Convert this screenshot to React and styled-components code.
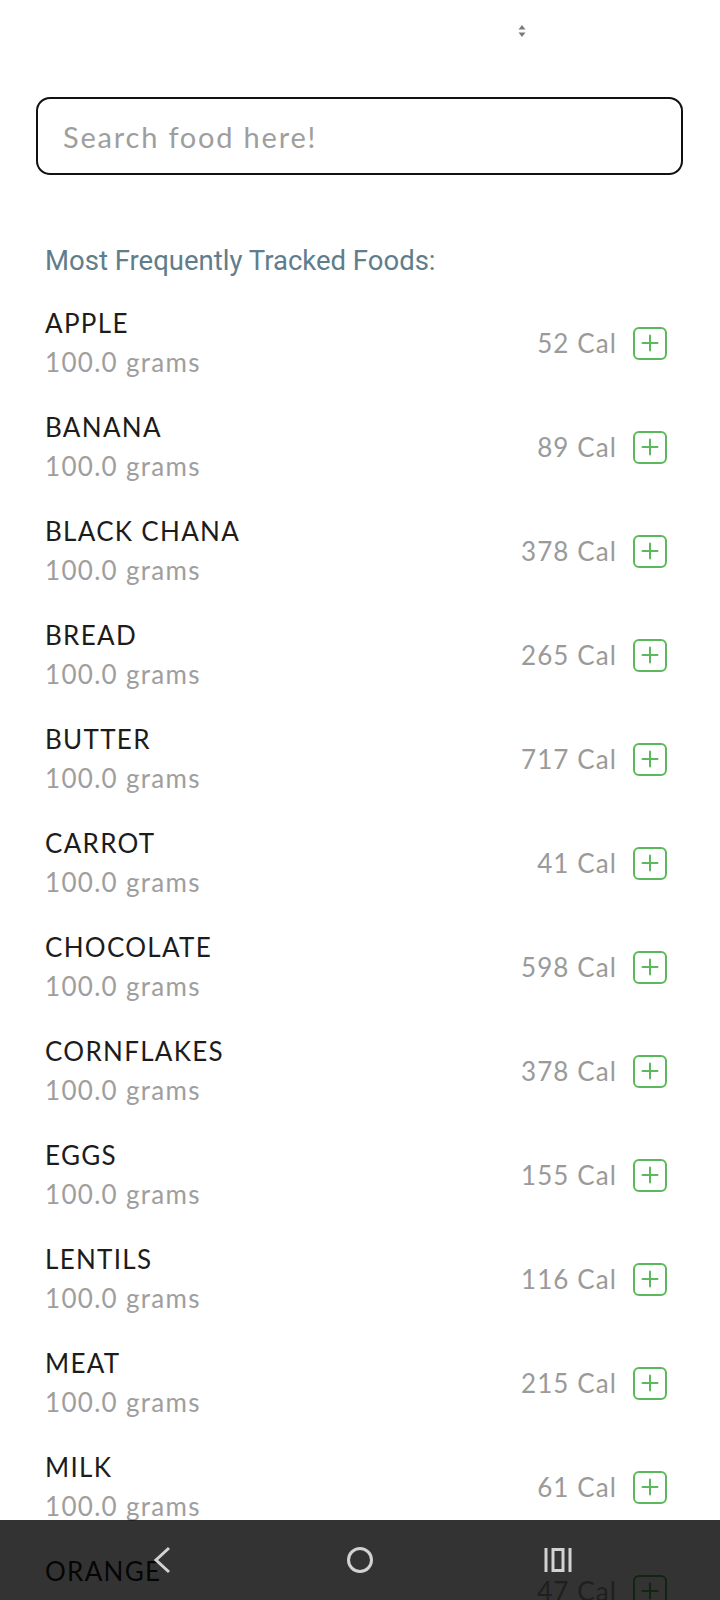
import React from "react";
import styled, { createGlobalStyle } from "styled-components";

const Global = createGlobalStyle`
  html, body { margin: 0; padding: 0; background: #fff; }
  * { box-sizing: border-box; }
`;

const Screen = styled.div`
  height: 100vh;
  overflow: hidden;
  background: #fff;
  font-family: Lato, "Noto Sans", sans-serif;
`;

const TopBar = styled.div`
  height: 97px;
  display: flex;
  justify-content: flex-start;
  padding-left: 518px;
  padding-top: 24px;
`;

const SearchWrap = styled.div`
  padding: 0 37px 0 36px;
`;

const SearchInput = styled.input`
  width: 100%;
  height: 78px;
  border: 2px solid #111;
  border-radius: 14px;
  padding: 0 25px;
  font-family: Lato, "Noto Sans", sans-serif;
  font-size: 29px;
  letter-spacing: 1.8px;
  color: #222;
  outline: none;
  background: #fff;
  &::placeholder { color: #9e9e9e; }
`;

const Heading = styled.div`
  margin: 70px 0 0 45px;
  font-family: Roboto, "Noto Sans", sans-serif;
  font-size: 27.5px;
  line-height: 31px;
  color: #607d8b;
`;

const List = styled.div`
  margin-top: 12px;
  padding: 0 53px 0 45px;
`;

const Row = styled.div`
  height: 104px;
  display: flex;
  align-items: center;
  justify-content: space-between;
`;

const Info = styled.div`
  align-self: flex-start;
  padding-top: 18px;
  display: flex;
  flex-direction: column;
`;

const Name = styled.div`
  font-size: 26px;
  line-height: 34px;
  letter-spacing: 1.3px;
  color: #1c1c1c;
`;

const Qty = styled.div`
  margin-top: 5px;
  font-size: 26px;
  line-height: 34px;
  letter-spacing: 1.3px;
  color: #9e9e9e;
`;

const Right = styled.div`
  display: flex;
  align-items: center;
  gap: 16px;
  margin-top: 6px;
`;

const Cal = styled.span`
  font-size: 26px;
  letter-spacing: 1.1px;
  color: #9a9a9a;
`;

const AddBtn = styled.button`
  width: 34px;
  height: 33px;
  border: 2px solid #5cb85c;
  border-radius: 6px;
  background: transparent;
  padding: 0;
  display: flex;
  align-items: center;
  justify-content: center;
`;

const NavBar = styled.div`
  position: fixed;
  left: 0;
  right: 0;
  bottom: 0;
  height: 80px;
  background: rgba(0, 0, 0, 0.8);
  display: flex;
  justify-content: center;
  align-items: center;
  gap: 158px;
`;

const NavSlot = styled.div`
  width: 40px;
  height: 40px;
  display: flex;
  align-items: center;
  justify-content: center;
`;

const foods = [
  ["APPLE", 52],
  ["BANANA", 89],
  ["BLACK CHANA", 378],
  ["BREAD", 265],
  ["BUTTER", 717],
  ["CARROT", 41],
  ["CHOCOLATE", 598],
  ["CORNFLAKES", 378],
  ["EGGS", 155],
  ["LENTILS", 116],
  ["MEAT", 215],
  ["MILK", 61],
  ["ORANGE", 47],
];

const SortIcon = () => (
  <svg width="8" height="14" viewBox="0 0 8 14">
    <path d="M4 1 L7.5 5.5 H0.5 Z" fill="#7a7a7a" />
    <path d="M4 13 L7.5 8.5 H0.5 Z" fill="#7a7a7a" />
  </svg>
);

const PlusIcon = () => (
  <svg width="18" height="18" viewBox="0 0 18 18">
    <path d="M9 1.5 V16.5 M1.5 9 H16.5" stroke="#5cb85c" strokeWidth="2" strokeLinecap="round" />
  </svg>
);

export default function App() {
  return (
    <Screen>
      <Global />
      <TopBar>
        <SortIcon />
      </TopBar>
      <SearchWrap>
        <SearchInput placeholder="Search food here!" />
      </SearchWrap>
      <Heading>Most Frequently Tracked Foods:</Heading>
      <List>
        {foods.map(([name, cal]) => (
          <Row key={name}>
            <Info>
              <Name>{name}</Name>
              <Qty>100.0 grams</Qty>
            </Info>
            <Right>
              <Cal>{cal} Cal</Cal>
              <AddBtn aria-label="add">
                <PlusIcon />
              </AddBtn>
            </Right>
          </Row>
        ))}
      </List>
      <NavBar>
        <NavSlot>
          <svg width="22" height="28" viewBox="0 0 22 28">
            <path d="M18 2 L5 14 L18 26" fill="none" stroke="#d2d2d2" strokeWidth="3" />
          </svg>
        </NavSlot>
        <NavSlot>
          <svg width="30" height="30" viewBox="0 0 30 30">
            <circle cx="15" cy="15" r="11.5" fill="none" stroke="#d2d2d2" strokeWidth="3" />
          </svg>
        </NavSlot>
        <NavSlot>
          <svg width="28" height="26" viewBox="0 0 28 26">
            <rect x="0.5" y="1" width="3" height="24" fill="#d2d2d2" />
            <rect x="9" y="2.5" width="10" height="21" fill="none" stroke="#d2d2d2" strokeWidth="3" />
            <rect x="24.5" y="1" width="3" height="24" fill="#d2d2d2" />
          </svg>
        </NavSlot>
      </NavBar>
    </Screen>
  );
}
